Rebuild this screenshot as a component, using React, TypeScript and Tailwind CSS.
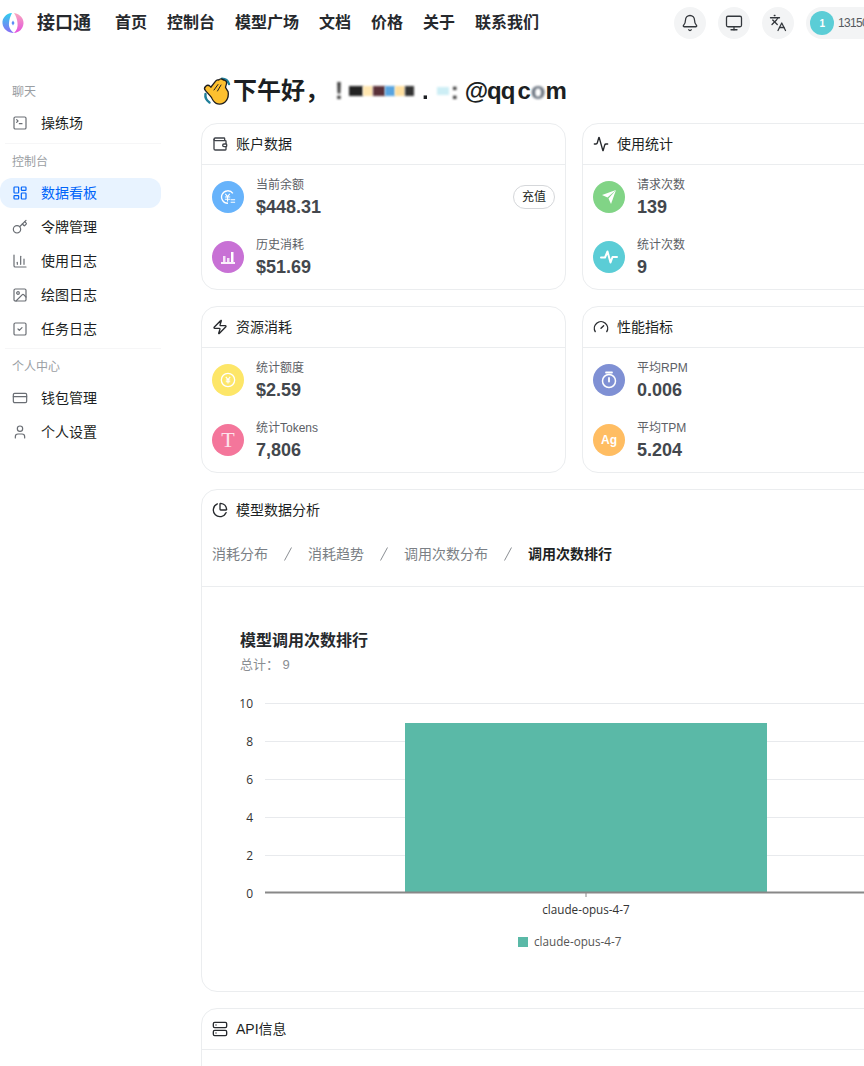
import { Bell, Monitor, Languages, SquareTerminal, LayoutDashboard, Key, ChartColumn, Image as ImageIcon, SquareCheck, CreditCard, User, Wallet, Activity, Zap, Gauge, ChartPie, Server } from 'lucide-react';
import type { ReactNode } from 'react';

const cjk = "font-['Liberation_Sans','Noto_Sans_CJK_SC',sans-serif]";

function Logo() {
  return (
    <svg width="22" height="22" viewBox="0 0 22 22" className="shrink-0">
      <defs>
        <linearGradient id="lg1" x1="0" y1="0" x2="0" y2="1">
          <stop offset="0" stopColor="#2fd0ee" />
          <stop offset="1" stopColor="#8a6cf5" />
        </linearGradient>
        <linearGradient id="lg2" x1="0" y1="0" x2="0" y2="1">
          <stop offset="0" stopColor="#f9a8bc" />
          <stop offset="1" stopColor="#e24fe0" />
        </linearGradient>
      </defs>
      <path d="M10 1 C4 1.500 0 6 0.500 11.500 C1 17 6 21 12 21 C8.500 18.500 6.500 15 7 11 C7.200 7 8.500 4 10 1Z" fill="url(#lg1)" />
      <path d="M12 1 C18 2 22 6.500 21.500 11.500 C21 17 17 20.500 12 21 C15 18 16 15 15.500 11 C15.200 7 14 4 12 1Z" fill="url(#lg2)" />
      <path d="M11 8.500 L12.500 11 L11 13.500 L9.500 11Z" fill="#5b8cf5" />
    </svg>
  );
}

function Wave() {
  const hand = (
    <>
      <rect x="9.500" y="2.500" width="5" height="15" rx="2.500" transform="rotate(38 12 10)" />
      <rect x="13" y="2" width="5" height="16" rx="2.500" transform="rotate(28 15.500 10)" />
      <rect x="16.500" y="3.500" width="5" height="15" rx="2.500" transform="rotate(16 19 11)" />
      <rect x="5" y="8" width="5" height="13" rx="2.500" transform="rotate(-42 7.500 14.500)" />
      <path d="M7 13 L19 6 L24.500 15 C25.500 21 22 26.500 16.500 26.500 C12 26.500 9 23 7 13Z" />
    </>
  );
  return (
    <svg width="28" height="28" viewBox="0 0 28 28" className="shrink-0">
      <path d="M2.500 17 C2 20 3.500 23.500 6.500 25.500" fill="none" stroke="#1f7f9a" strokeWidth="2.400" strokeLinecap="round" />
      <path d="M19 1.800 C22 1.800 25 3.800 26 7" fill="none" stroke="#1f7f9a" strokeWidth="2.400" strokeLinecap="round" />
      <g fill="#1d1d1f" stroke="#1d1d1f" strokeWidth="2.600" strokeLinejoin="round">{hand}</g>
      <g fill="#fdc02f">{hand}</g>
      <path d="M11 13 L15 7.500 M14.500 14 L18 8" fill="none" stroke="#1d1d1f" strokeWidth="1" strokeLinecap="round" />
    </svg>
  );
}

function Coin({ double }: { double?: boolean }) {
  return (
    <svg width="16" height="16" viewBox="0 0 18 18" fill="none" stroke="white" strokeWidth="1.500">
      {double ? (
        <>
          <path d="M14.500 5 A7 7 0 1 0 9 16" />
          <path d="M6 5.500 L8.500 8.500 L11 5.500 M5.500 9 H11.500 M5.500 11.500 H11.500 M8.500 8.500 V14" strokeWidth="1.200" />
          <path d="M12 12 H17 M12 15 H17" strokeWidth="1.200" />
        </>
      ) : (
        <>
          <circle cx="9" cy="9" r="7.500" />
          <path d="M6.500 5.500 L9 8.500 L11.500 5.500 M6.500 9 H11.500 M6.500 11 H11.500 M9 8.500 V13" strokeWidth="1.200" />
        </>
      )}
    </svg>
  );
}

const bars = (
  <svg width="16" height="16" viewBox="0 0 16 16" fill="white">
    <rect x="1" y="13" width="14" height="2" opacity="0.9" />
    <rect x="3" y="7" width="2.500" height="6" opacity="0.8" />
    <rect x="7" y="9" width="2.500" height="4" opacity="0.8" />
    <rect x="11" y="3" width="2.500" height="10" />
  </svg>
);

const plane = (
  <svg width="16" height="16" viewBox="0 0 16 16" fill="white">
    <path d="M15 1 L1 6 L6.500 8.500 L15 1Z" />
    <path d="M15 1 L10 15 L7.500 9.500 L15 1Z" />
  </svg>
);

const pulse = (
  <svg width="18" height="18" viewBox="0 0 18 18" fill="none" stroke="white" strokeWidth="2" strokeLinecap="round" strokeLinejoin="round">
    <path d="M1 9.500 H5 L7.500 3.500 L10.500 14.500 L12.500 9 H17" />
  </svg>
);

const stopwatch = (
  <svg width="18" height="18" viewBox="0 0 18 18" fill="none" stroke="white" strokeWidth="1.500" strokeLinecap="round">
    <path d="M6 1.500 H12" strokeWidth="1.800" />
    <circle cx="9" cy="10" r="6.500" />
    <path d="M9 7 V10.500" strokeWidth="1.800" />
  </svg>
);

const serifT = <span className="font-['Liberation_Serif',serif] text-[22px] leading-none text-[#fde3ec]">T</span>;
const ag = <span className="font-['Liberation_Sans',sans-serif] text-[12px] font-bold text-white">Ag</span>;

const groups: { title: string; icon: ReactNode; stats: { label: string; value: string; bg: string; icon: ReactNode; action?: boolean }[] }[] = [
  {
    title: '账户数据',
    icon: <Wallet size={16} strokeWidth={2} className="text-[#3f4349]" />,
    stats: [
      { label: '当前余额', value: '$448.31', bg: 'bg-[#67b3fb]', icon: <Coin double />, action: true },
      { label: '历史消耗', value: '$51.69', bg: 'bg-[#c871d5]', icon: bars },
    ],
  },
  {
    title: '使用统计',
    icon: <Activity size={16} strokeWidth={2} className="text-[#26292d]" />,
    stats: [
      { label: '请求次数', value: '139', bg: 'bg-[#81d486]', icon: plane },
      { label: '统计次数', value: '9', bg: 'bg-[#5bcdd6]', icon: pulse },
    ],
  },
  {
    title: '资源消耗',
    icon: <Zap size={16} strokeWidth={2} className="text-[#26292d]" />,
    stats: [
      { label: '统计额度', value: '$2.59', bg: 'bg-[#fde668]', icon: <Coin /> },
      { label: '统计Tokens', value: '7,806', bg: 'bg-[#f4769b]', icon: serifT },
    ],
  },
  {
    title: '性能指标',
    icon: <Gauge size={16} strokeWidth={2} className="text-[#26292d]" />,
    stats: [
      { label: '平均RPM', value: '0.006', bg: 'bg-[#7f90d4]', icon: stopwatch },
      { label: '平均TPM', value: '5.204', bg: 'bg-[#ffbd62]', icon: ag },
    ],
  },
];

const sideGroups = [
  { label: '聊天', items: [{ name: '操练场', icon: SquareTerminal }] },
  {
    label: '控制台',
    items: [
      { name: '数据看板', icon: LayoutDashboard, active: true },
      { name: '令牌管理', icon: Key },
      { name: '使用日志', icon: ChartColumn },
      { name: '绘图日志', icon: ImageIcon },
      { name: '任务日志', icon: SquareCheck },
    ],
  },
  {
    label: '个人中心',
    items: [
      { name: '钱包管理', icon: CreditCard },
      { name: '个人设置', icon: User },
    ],
  },
];

function Card({ title, icon, children }: { title: string; icon: ReactNode; children: ReactNode }) {
  return (
    <div className="rounded-2xl border border-[#ebedef] bg-white">
      <div className="flex h-[40px] items-center gap-[8px] px-[10px] text-[14px] text-[#1c1f23]">
        {icon}
        <span>{title}</span>
      </div>
      {children}
    </div>
  );
}

function Chart() {
  const ticks = [10, 8, 6, 4, 2];
  return (
    <svg width="680" height="270" viewBox="0 0 680 270" className="block font-['Open_Sans',sans-serif]">
      {ticks.map((t, i) => (
        <g key={t}>
          <line x1="64" x2="680" y1={i * 38 + 7.500} y2={i * 38 + 7.500} stroke="#e8eaed" />
          <text x="52" y={i * 38 + 12} textAnchor="end" fontSize="12" fill="#333">{t}</text>
        </g>
      ))}
      <text x="52" y="202" textAnchor="end" fontSize="12" fill="#333">0</text>
      <rect x="204" y="27" width="362" height="170" fill="#5ab9a7" />
      <line x1="64" x2="680" y1="196.500" y2="196.500" stroke="#888" strokeWidth="2" />
      <line x1="385" x2="385" y1="197" y2="201" stroke="#888" />
      <text x="385" y="218" textAnchor="middle" fontSize="11.700" fill="#333">claude-opus-4-7</text>
      <rect x="317" y="241" width="10" height="10" fill="#5ab9a7" />
      <text x="333" y="250" fontSize="11.700" fill="#555">claude-opus-4-7</text>
    </svg>
  );
}

function Slash() {
  return (
    <span className="flex w-[40px] justify-center">
      <svg width="8" height="14" viewBox="0 0 8 14" fill="none" stroke="#8a8e93" strokeWidth="1">
        <path d="M7.500 0.500 L0.500 13.500" />
      </svg>
    </span>
  );
}

export default function App() {
  return (
    <div className={`h-[1066px] w-[864px] overflow-hidden bg-white ${cjk}`}>
      <header className="flex h-[46px] items-center">
        <div className="ml-[2px] flex w-[113px] shrink-0 items-center gap-[13px]">
          <Logo />
          <span className="text-[18px] font-bold text-[#26292d]">接口通</span>
        </div>
        <nav className="flex gap-[20px] text-[16px] font-semibold text-[#26292d]">
          {['首页', '控制台', '模型广场', '文档', '价格', '关于', '联系我们'].map(n => (
            <span key={n}>{n}</span>
          ))}
        </nav>
        <div className="ml-auto flex shrink-0 items-center gap-[12px]">
          {[Bell, Monitor, Languages].map((Icon, i) => (
            <div key={i} className="flex h-[32px] w-[32px] items-center justify-center rounded-full bg-[#f3f4f5]">
              <Icon size={18} strokeWidth={1.7} className="text-[#33373c]" />
            </div>
          ))}
          <div className="flex h-[32px] w-[58px] items-center gap-[4px] overflow-hidden rounded-l-full bg-[#f3f4f5] pl-[4px] text-[12px] tracking-[-0.7px] text-[#555a60]">
            <div className="flex h-[24px] w-[24px] shrink-0 items-center justify-center rounded-full bg-[#5bcdd6] text-[10px] font-semibold text-white">1</div>
            <span>13150</span>
          </div>
        </div>
      </header>

      <div className="flex">
        <aside className="w-[201px] shrink-0 pt-[36px]">
          <div className="w-[161px]">
            {sideGroups.map((g, gi) => (
              <div key={g.label}>
                <div className="flex h-[18px] items-center pl-[12px] pt-[2px] text-[12px] text-[#9a9ea3]">{g.label}</div>
                <div className="mt-[8px] flex flex-col gap-[4px]">
                  {g.items.map(item => {
                    const active = 'active' in item && item.active;
                    return (
                      <div
                        key={item.name}
                        className={`flex h-[30px] items-center gap-[13px] rounded-xl pl-[12px] text-[14px] ${active ? 'bg-[#e8f3ff] text-[#0064fa]' : 'text-[#1c1f23]'}`}
                      >
                        <item.icon size={16} strokeWidth={1.8} className={active ? 'text-[#0064fa]' : 'text-[#6a6e74]'} />
                        <span>{item.name}</span>
                      </div>
                    );
                  })}
                </div>
                {gi < sideGroups.length - 1 && (
                  <div className={`mb-[8px] ml-[5px] border-b border-[#f6f6f7] ${gi === 0 ? 'pt-[5px]' : 'pt-[4px]'}`} />
                )}
              </div>
            ))}
          </div>
        </aside>

        <main className="w-[746px] shrink-0 pt-[27px]">
          <div className="flex h-[36px] items-center gap-[2px] pl-[2px] text-[24px] font-bold text-[#1c1f23]">
            <Wave />
            <span className="w-[100px] shrink-0">下午好，</span>
            <span className="flex items-center">
              <span className="w-[14px] text-[#333] blur-[1px]">!</span>
              <span className="h-[10px] w-[14px] bg-[#222] blur-[1px]" />
              <span className="h-[10px] w-[10px] bg-[#ffe6b0] blur-[1px]" />
              <span className="h-[10px] w-[12px] bg-[#5a3038] blur-[1px]" />
              <span className="h-[10px] w-[10px] bg-[#58a4e0] blur-[1px]" />
              <span className="h-[10px] w-[10px] bg-[#ffe0a0] blur-[1px]" />
              <span className="h-[10px] w-[9px] bg-[#333] blur-[1px]" />
              <span className="ml-[8px] blur-[0.5px]">.</span>
              <span className="ml-[8px] h-[8px] w-[12px] bg-[#cdeef5] blur-[1px]" />
              <span className="ml-[2px] w-[14px] text-[#333] blur-[1px]">:</span>
              <span className="tracking-[-1px]">@qq</span>
              <span className="ml-[3px]">c</span>
              <span className="text-[#6b7480] blur-[1px]">o</span>
              <span>m</span>
            </span>
          </div>

          <div className="mt-[14px] grid grid-cols-2 gap-[16px]">
            {groups.map(group => (
              <Card key={group.title} title={group.title} icon={group.icon}>
                <div className="flex flex-col gap-[28px] border-t border-[#ebedef] px-[10px] pb-[16px] pt-[16px]">
                  {group.stats.map(s => (
                    <div key={s.label} className="flex h-[32px] items-center gap-[12px]">
                      <div className={`flex h-[32px] w-[32px] shrink-0 items-center justify-center rounded-full ${s.bg}`}>{s.icon}</div>
                      <div className="flex flex-col">
                        <span className="text-[12px] leading-[16px] text-[#5c6066]">{s.label}</span>
                        <span className="mt-[3px] text-[18px] font-bold leading-[22px] text-[#43474d]">{s.value}</span>
                      </div>
                      {s.action && (
                        <button className="ml-auto flex h-[24px] w-[42px] items-center justify-center rounded-full border border-[#d5d7da] bg-white text-[12px] text-[#1c1f23]">
                          充值
                        </button>
                      )}
                    </div>
                  ))}
                </div>
              </Card>
            ))}
          </div>

          <div className="mt-[16px]">
            <Card title="模型数据分析" icon={<ChartPie size={16} strokeWidth={2} className="text-[#26292d]" />}>
              <div className="flex h-[57px] items-center border-b border-[#ebedef] pb-[8px] pl-[10px] text-[14px] text-[#7b7f85]">
                {['消耗分布', '消耗趋势', '调用次数分布'].map(t => (
                  <span key={t} className="flex items-center">
                    <span>{t}</span>
                    <Slash />
                  </span>
                ))}
                <span className="font-bold text-[#1c1f23]">调用次数排行</span>
              </div>
              <div className="h-[404px] pl-[38px] pt-[43px]">
                <div className="text-[16px] font-semibold leading-[22px] text-[#26292d]">模型调用次数排行</div>
                <div className="mt-[3px] text-[13px] leading-[20px] text-[#8a8e93]">总计： 9</div>
                <div className="-ml-[39px] mt-[21px]">
                  <Chart />
                </div>
              </div>
            </Card>
          </div>

          <div className="mt-[16px]">
            <Card title="API信息" icon={<Server size={16} strokeWidth={2} className="text-[#26292d]" />}>
              <div className="h-[60px] border-t border-[#ebedef]" />
            </Card>
          </div>
        </main>
      </div>
    </div>
  );
}
